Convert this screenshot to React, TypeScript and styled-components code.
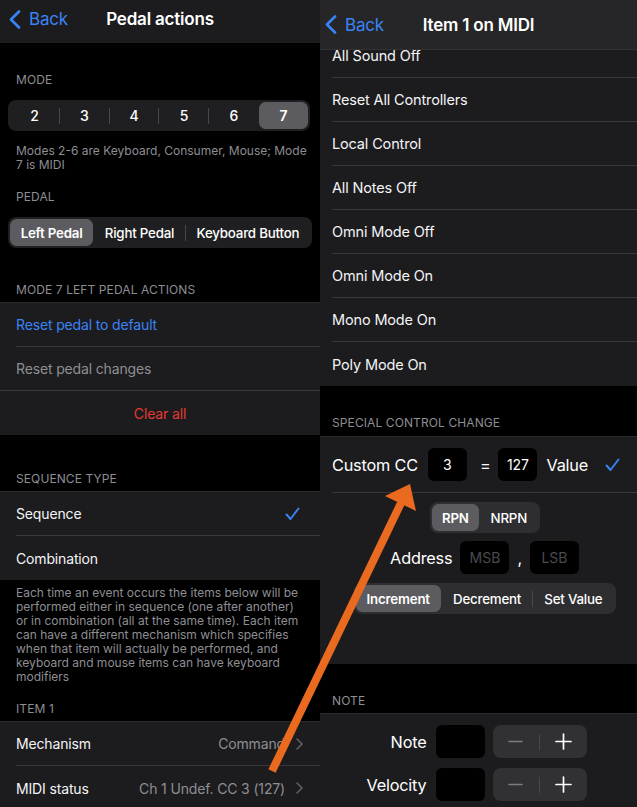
import React from "react";
import styled, { createGlobalStyle } from "styled-components";

const GlobalStyle = createGlobalStyle`
  html, body {
    margin: 0;
    padding: 0;
    background: #000;
  }
  body {
    font-family: Inter, "Noto Sans", sans-serif;
    color: #f4f4f6;
    -webkit-font-smoothing: antialiased;
  }
`;

const BLUE = "#3a83f7";
const RED = "#e23a2f";
const MUTED = "#8e8e93";
const LINE = "#38383a";

const Page = styled.div`
  position: relative;
  display: flex;
  width: 637px;
  height: 807px;
  overflow: hidden;
  background: #000;
`;

const Pane = styled.div<{ $width?: number }>`
  display: flex;
  flex-direction: column;
  flex: ${(p) => (p.$width ? "none" : "1")};
  width: ${(p) => (p.$width ? `${p.$width}px` : "auto")};
  min-width: 0;
  overflow: hidden;
`;

const NavBar = styled.div<{ $height: number; $bg: string; $pad: number; $lift?: number; $line?: boolean }>`
  position: relative;
  z-index: 2;
  flex: none;
  display: grid;
  grid-template-columns: 1fr auto 1fr;
  align-items: center;
  height: ${(p) => p.$height}px;
  padding: 0 ${(p) => p.$pad}px ${(p) => p.$lift ?? 0}px;
  box-sizing: border-box;
  background: ${(p) => p.$bg};
  border-bottom: ${(p) => (p.$line ? "1px solid #323234" : "none")};
`;

const BackButton = styled.div`
  display: flex;
  align-items: center;
  gap: 8px;
  color: ${BLUE};
  font-size: 17px;
  letter-spacing: -0.2px;
`;

const NavTitle = styled.div`
  font-size: 17px;
  font-weight: 600;
  letter-spacing: -0.2px;
  color: #fff;
`;

const Content = styled.div`
  display: flex;
  flex-direction: column;
`;

const SectionHeader = styled.div<{ $top: number; $bottom: number; $inset: number }>`
  margin: ${(p) => p.$top}px 0 ${(p) => p.$bottom}px;
  padding-left: ${(p) => p.$inset}px;
  font-size: 12px;
  line-height: 16px;
  color: ${MUTED};
  text-transform: uppercase;
  letter-spacing: 0.1px;
  white-space: nowrap;
`;

const FooterText = styled.div<{ $top: number }>`
  margin-top: ${(p) => p.$top}px;
  padding: 0 16px;
  font-size: 12px;
  line-height: 14px;
  color: ${MUTED};
  white-space: nowrap;
`;

const Group = styled.div<{ $edge?: boolean }>`
  background: #1c1c1e;
  box-shadow: ${(p) => (p.$edge ? "0 -1px 0 #2a2a2c" : "none")};
`;

const Row = styled.div<{ $inset: number; $full?: boolean }>`
  display: flex;
  height: 44px;
  box-sizing: border-box;
  padding-left: ${(p) => p.$inset}px;
  border-bottom: ${(p) => (p.$full ? `1px solid ${LINE}` : "none")};
`;

const RowBody = styled.div<{ $line?: boolean; $center?: boolean; $right: number }>`
  flex: 1;
  display: flex;
  align-items: center;
  justify-content: ${(p) => (p.$center ? "center" : "space-between")};
  padding-right: ${(p) => p.$right}px;
  box-sizing: border-box;
  border-bottom: ${(p) => (p.$line ? `1px solid ${LINE}` : "none")};
`;

const tones = {
  primary: "#f4f4f6",
  blue: BLUE,
  muted: MUTED,
  red: RED,
};

const RowText = styled.span<{ $tone?: keyof typeof tones; $size?: number }>`
  font-size: ${(p) => p.$size ?? 14}px;
  color: ${(p) => tones[p.$tone ?? "primary"]};
  letter-spacing: -0.15px;
  white-space: nowrap;
`;

const Detail = styled.span`
  display: flex;
  align-items: center;
  gap: 11px;
  font-size: 14px;
  color: ${MUTED};
  letter-spacing: -0.15px;
  white-space: nowrap;
`;

const SegTrack = styled.div<{ $bg: string; $width?: number; $margin?: string }>`
  display: flex;
  align-items: center;
  flex: none;
  width: ${(p) => (p.$width ? `${p.$width}px` : "auto")};
  height: 31px;
  margin: ${(p) => p.$margin ?? "0"};
  padding: 2px;
  box-sizing: border-box;
  border-radius: 8px;
  background: ${(p) => p.$bg};
`;

const Segment = styled.div<{ $active: boolean; $equal?: boolean; $size: number }>`
  flex: 1 1 ${(p) => (p.$equal ? "0" : "auto")};
  display: flex;
  align-items: center;
  justify-content: center;
  height: 100%;
  padding: 0 6px;
  border-radius: 6.5px;
  background: ${(p) => (p.$active ? "#5c5c60" : "transparent")};
  font-size: ${(p) => p.$size}px;
  font-weight: ${(p) => (p.$active ? 600 : 500)};
  letter-spacing: -0.2px;
  color: #fff;
  white-space: nowrap;
`;

const SegDivider = styled.div<{ $hidden: boolean }>`
  flex: none;
  width: 1px;
  height: 16px;
  background: ${(p) => (p.$hidden ? "transparent" : "#48484a")};
`;

const CCRow = styled.div`
  display: flex;
  align-items: center;
  height: 56px;
  margin-left: 12px;
  box-sizing: border-box;
  border-bottom: 1px solid ${LINE};
`;

const BigText = styled.span<{ $gapLeft?: number }>`
  font-size: 16.3px;
  letter-spacing: -0.2px;
  color: #fff;
  margin-left: ${(p) => p.$gapLeft ?? 0}px;
  white-space: nowrap;
`;

const Field = styled.div<{ $width: number; $gapLeft?: number; $placeholder?: boolean }>`
  display: flex;
  align-items: center;
  justify-content: center;
  flex: none;
  width: ${(p) => p.$width}px;
  height: 33px;
  margin-left: ${(p) => p.$gapLeft ?? 0}px;
  border-radius: 6px;
  background: #000;
  font-size: 14px;
  color: ${(p) => (p.$placeholder ? "#4a4a4e" : "#fff")};
`;

const CheckSlot = styled.span<{ $gapLeft: number }>`
  display: flex;
  margin-left: ${(p) => p.$gapLeft}px;
`;

const CenterStack = styled.div`
  display: flex;
  flex-direction: column;
  align-items: center;
  padding: 9px 0 50px 12px;
`;

const Spaced = styled.div<{ $top: number }>`
  display: flex;
  align-items: center;
  margin-top: ${(p) => p.$top}px;
`;

const NoteGrid = styled.div`
  display: grid;
  grid-template-columns: 1fr 1fr;
  row-gap: 10px;
  padding: 11px 0 12px 12px;
`;

const NoteLabel = styled.div`
  display: flex;
  align-items: center;
  justify-content: flex-end;
  gap: 9px;
`;

const StepperCell = styled.div`
  display: flex;
  align-items: center;
  padding-left: 8px;
`;

const Stepper = styled.div`
  display: flex;
  align-items: center;
  width: 94px;
  height: 33px;
  border-radius: 8px;
  background: #313134;
`;

const StepButton = styled.div`
  flex: 1;
  display: flex;
  align-items: center;
  justify-content: center;
`;

const Arrow = styled.svg`
  position: absolute;
  left: 0;
  top: 0;
  width: 637px;
  height: 807px;
  pointer-events: none;
  z-index: 5;
`;

const Chevron = ({ big }: { big?: boolean }) =>
  big ? (
    <svg width="12" height="19" viewBox="0 0 12 19">
      <path d="M10 1.5 L2 9.5 L10 17.5" fill="none" stroke={BLUE} strokeWidth="2.6" strokeLinecap="round" strokeLinejoin="round" />
    </svg>
  ) : (
    <svg width="7" height="12" viewBox="0 0 7 12">
      <path d="M1 1 L6 6 L1 11" fill="none" stroke="#5f5f64" strokeWidth="1.6" strokeLinecap="round" strokeLinejoin="round" />
    </svg>
  );

const Check = () => (
  <svg width="15" height="14" viewBox="0 0 15 14">
    <path d="M1.5 7.5 L5.5 12 L13.5 1.5" fill="none" stroke={BLUE} strokeWidth="1.9" strokeLinecap="round" strokeLinejoin="round" />
  </svg>
);

const Minus = () => (
  <svg width="15" height="15" viewBox="0 0 15 15">
    <line x1="1" y1="7.5" x2="14" y2="7.5" stroke="#7c7c81" strokeWidth="1.6" strokeLinecap="round" />
  </svg>
);

const Plus = () => (
  <svg width="17" height="17" viewBox="0 0 17 17">
    <line x1="1" y1="8.5" x2="16" y2="8.5" stroke="#fff" strokeWidth="1.7" strokeLinecap="round" />
    <line x1="8.5" y1="1" x2="8.5" y2="16" stroke="#fff" strokeWidth="1.7" strokeLinecap="round" />
  </svg>
);

type SegProps = {
  items: string[];
  active: number;
  bg: string;
  size: number;
  equal?: boolean;
  width?: number;
  margin?: string;
};

const SegmentedControl = ({ items, active, bg, size, equal, width, margin }: SegProps) => (
  <SegTrack $bg={bg} $width={width} $margin={margin}>
    {items.map((item, i) => (
      <React.Fragment key={item}>
        {i > 0 && <SegDivider $hidden={i === active || i - 1 === active} />}
        <Segment $active={i === active} $equal={equal} $size={size}>
          {item}
        </Segment>
      </React.Fragment>
    ))}
  </SegTrack>
);

const ccItems = [
  "All Sound Off",
  "Reset All Controllers",
  "Local Control",
  "All Notes Off",
  "Omni Mode Off",
  "Omni Mode On",
  "Mono Mode On",
  "Poly Mode On",
];

const PedalActions = () => (
  <Pane $width={320}>
    <NavBar $height={43} $bg="#1c1c1e" $pad={9} $lift={5}>
      <BackButton>
        <Chevron big />
        Back
      </BackButton>
      <NavTitle>Pedal actions</NavTitle>
      <div />
    </NavBar>
    <Content>
      <SectionHeader $top={29} $bottom={12} $inset={16}>
        Mode
      </SectionHeader>
      <SegmentedControl
        items={["2", "3", "4", "5", "6", "7"]}
        active={5}
        bg="#1f1f21"
        size={14}
        equal
        margin="0 10px 0 8px"
      />
      <FooterText $top={13}>
        Modes 2-6 are Keyboard, Consumer, Mouse; Mode
        <br />7 is MIDI
      </FooterText>
      <SectionHeader $top={17} $bottom={12} $inset={16}>
        Pedal
      </SectionHeader>
      <SegmentedControl
        items={["Left Pedal", "Right Pedal", "Keyboard Button"]}
        active={0}
        bg="#1f1f21"
        size={13.3}
        margin="0 8px 0 8px"
      />
      <SectionHeader $top={34} $bottom={5} $inset={16}>
        Mode 7 left pedal actions
      </SectionHeader>
      <Group $edge>
        <Row $inset={16}>
          <RowBody $line $right={16}>
            <RowText $tone="blue">Reset pedal to default</RowText>
          </RowBody>
        </Row>
        <Row $inset={16} $full>
          <RowBody $right={16}>
            <RowText $tone="muted">Reset pedal changes</RowText>
          </RowBody>
        </Row>
        <Row $inset={16}>
          <RowBody $center $right={16}>
            <RowText $tone="red">Clear all</RowText>
          </RowBody>
        </Row>
      </Group>
      <SectionHeader $top={36} $bottom={5} $inset={16}>
        Sequence type
      </SectionHeader>
      <Group $edge>
        <Row $inset={16}>
          <RowBody $line $right={20}>
            <RowText>Sequence</RowText>
            <Check />
          </RowBody>
        </Row>
        <Row $inset={16}>
          <RowBody $right={16}>
            <RowText>Combination</RowText>
          </RowBody>
        </Row>
      </Group>
      <FooterText $top={6}>
        Each time an event occurs the items below will be
        <br />
        performed either in sequence (one after another)
        <br />
        or in combination (all at the same time). Each item
        <br />
        can have a different mechanism which specifies
        <br />
        when that item will actually be performed, and
        <br />
        keyboard and mouse items can have keyboard
        <br />
        modifiers
      </FooterText>
      <SectionHeader $top={17} $bottom={5} $inset={16}>
        Item 1
      </SectionHeader>
      <Group $edge>
        <Row $inset={16}>
          <RowBody $line $right={17}>
            <RowText>Mechanism</RowText>
            <Detail>
              Command
              <Chevron />
            </Detail>
          </RowBody>
        </Row>
        <Row $inset={16}>
          <RowBody $right={17}>
            <RowText>MIDI status</RowText>
            <Detail>
              Ch 1 Undef. CC 3 (127)
              <Chevron />
            </Detail>
          </RowBody>
        </Row>
      </Group>
    </Content>
  </Pane>
);

const ItemOnMidi = () => (
  <Pane>
    <NavBar $height={50} $bg="#262628" $pad={5} $line>
      <BackButton>
        <Chevron big />
        Back
      </BackButton>
      <NavTitle>Item 1 on MIDI</NavTitle>
      <div />
    </NavBar>
    <Content style={{ marginTop: -16 }}>
      <Group>
        {ccItems.map((item, i) => (
          <Row key={item} $inset={12}>
            <RowBody $line={i < ccItems.length - 1} $right={12}>
              <RowText $size={14.5}>{item}</RowText>
            </RowBody>
          </Row>
        ))}
      </Group>
      <SectionHeader $top={29} $bottom={6} $inset={12}>
        Special control change
      </SectionHeader>
      <Group $edge>
        <CCRow>
          <BigText>Custom CC</BigText>
          <Field $width={39} $gapLeft={10}>
            3
          </Field>
          <BigText $gapLeft={13}>=</BigText>
          <Field $width={39} $gapLeft={8}>
            127
          </Field>
          <BigText $gapLeft={9}>Value</BigText>
          <CheckSlot $gapLeft={17}>
            <Check />
          </CheckSlot>
        </CCRow>
        <CenterStack>
          <SegmentedControl items={["RPN", "NRPN"]} active={0} bg="#2e2e31" size={13.3} width={110} />
          <Spaced $top={8}>
            <BigText>Address</BigText>
            <Field $width={49} $gapLeft={8} $placeholder>
              MSB
            </Field>
            <BigText $gapLeft={8}>,</BigText>
            <Field $width={49} $gapLeft={8} $placeholder>
              LSB
            </Field>
          </Spaced>
          <Spaced $top={9}>
            <SegmentedControl
              items={["Increment", "Decrement", "Set Value"]}
              active={0}
              bg="#2e2e31"
              size={13.3}
              width={262}
            />
          </Spaced>
        </CenterStack>
      </Group>
      <SectionHeader $top={29} $bottom={5} $inset={12}>
        Note
      </SectionHeader>
      <Group $edge>
        <NoteGrid>
          {["Note", "Velocity"].map((label) => (
            <React.Fragment key={label}>
              <NoteLabel>
                <BigText>{label}</BigText>
                <Field $width={49} />
              </NoteLabel>
              <StepperCell>
                <Stepper>
                  <StepButton>
                    <Minus />
                  </StepButton>
                  <SegDivider $hidden={false} />
                  <StepButton>
                    <Plus />
                  </StepButton>
                </Stepper>
              </StepperCell>
            </React.Fragment>
          ))}
        </NoteGrid>
      </Group>
    </Content>
  </Pane>
);

export default function App() {
  return (
    <>
      <GlobalStyle />
      <Page>
        <PedalActions />
        <ItemOnMidi />
        <Arrow viewBox="0 0 637 807">
          <line x1="272" y1="771" x2="401" y2="503" stroke="#ea6a1f" strokeWidth="8" />
          <polygon points="410,484 416,511 385,496" fill="#ea6a1f" />
        </Arrow>
      </Page>
    </>
  );
}
